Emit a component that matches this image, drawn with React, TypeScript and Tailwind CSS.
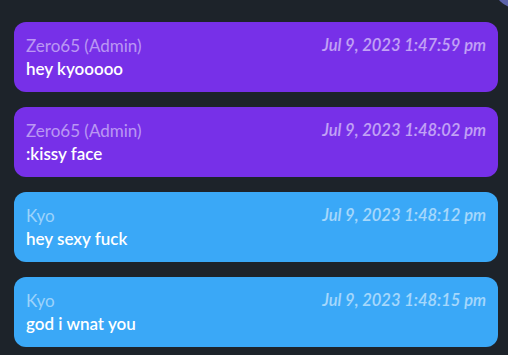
import React from 'react'

type Message = {
	id: number
	author: string
	text: string
	time: string
	admin: boolean
}

const messages: Message[] = [
	{ id: 1, author: 'Zero65 (Admin)', text: 'hey kyooooo', time: 'Jul 9, 2023 1:47:59 pm', admin: true },
	{ id: 2, author: 'Zero65 (Admin)', text: ':kissy face', time: 'Jul 9, 2023 1:48:02 pm', admin: true },
	{ id: 3, author: 'Kyo', text: 'hey sexy fuck', time: 'Jul 9, 2023 1:48:12 pm', admin: false },
	{ id: 4, author: 'Kyo', text: 'god i wnat you', time: 'Jul 9, 2023 1:48:15 pm', admin: false },
]

export default function App() {
	return (
		<div
			className="relative h-[355px] w-[508px] overflow-hidden bg-[#1d232a]"
			style={{ fontFamily: 'Lato, "Noto Sans", sans-serif' }}
		>
			<div className="absolute left-[494px] top-[-36px] h-[44px] w-[44px] rounded-full bg-[#5b62a8]" />
			<div className="flex flex-col gap-[15px] pl-[14px] pr-[10px] pt-[22px]">
				{messages.map((m) => (
					<div
						key={m.id}
						className={
							m.admin
								? 'h-[70px] rounded-[12px] bg-[#7730e8] pl-3 pr-3 pt-3 text-white'
								: 'h-[70px] rounded-[12px] bg-[#3aa8f7] pl-3 pr-3 pt-3 text-white'
						}
					>
						<div className="flex items-center justify-between text-[17px] leading-[23px]">
							<span className="text-white/50">{m.author}</span>
							<span className="text-[16.5px] font-semibold italic text-white/55">{m.time}</span>
						</div>
						<p className="text-[17px] font-semibold leading-[24px]">{m.text}</p>
					</div>
				))}
			</div>
		</div>
	)
}
